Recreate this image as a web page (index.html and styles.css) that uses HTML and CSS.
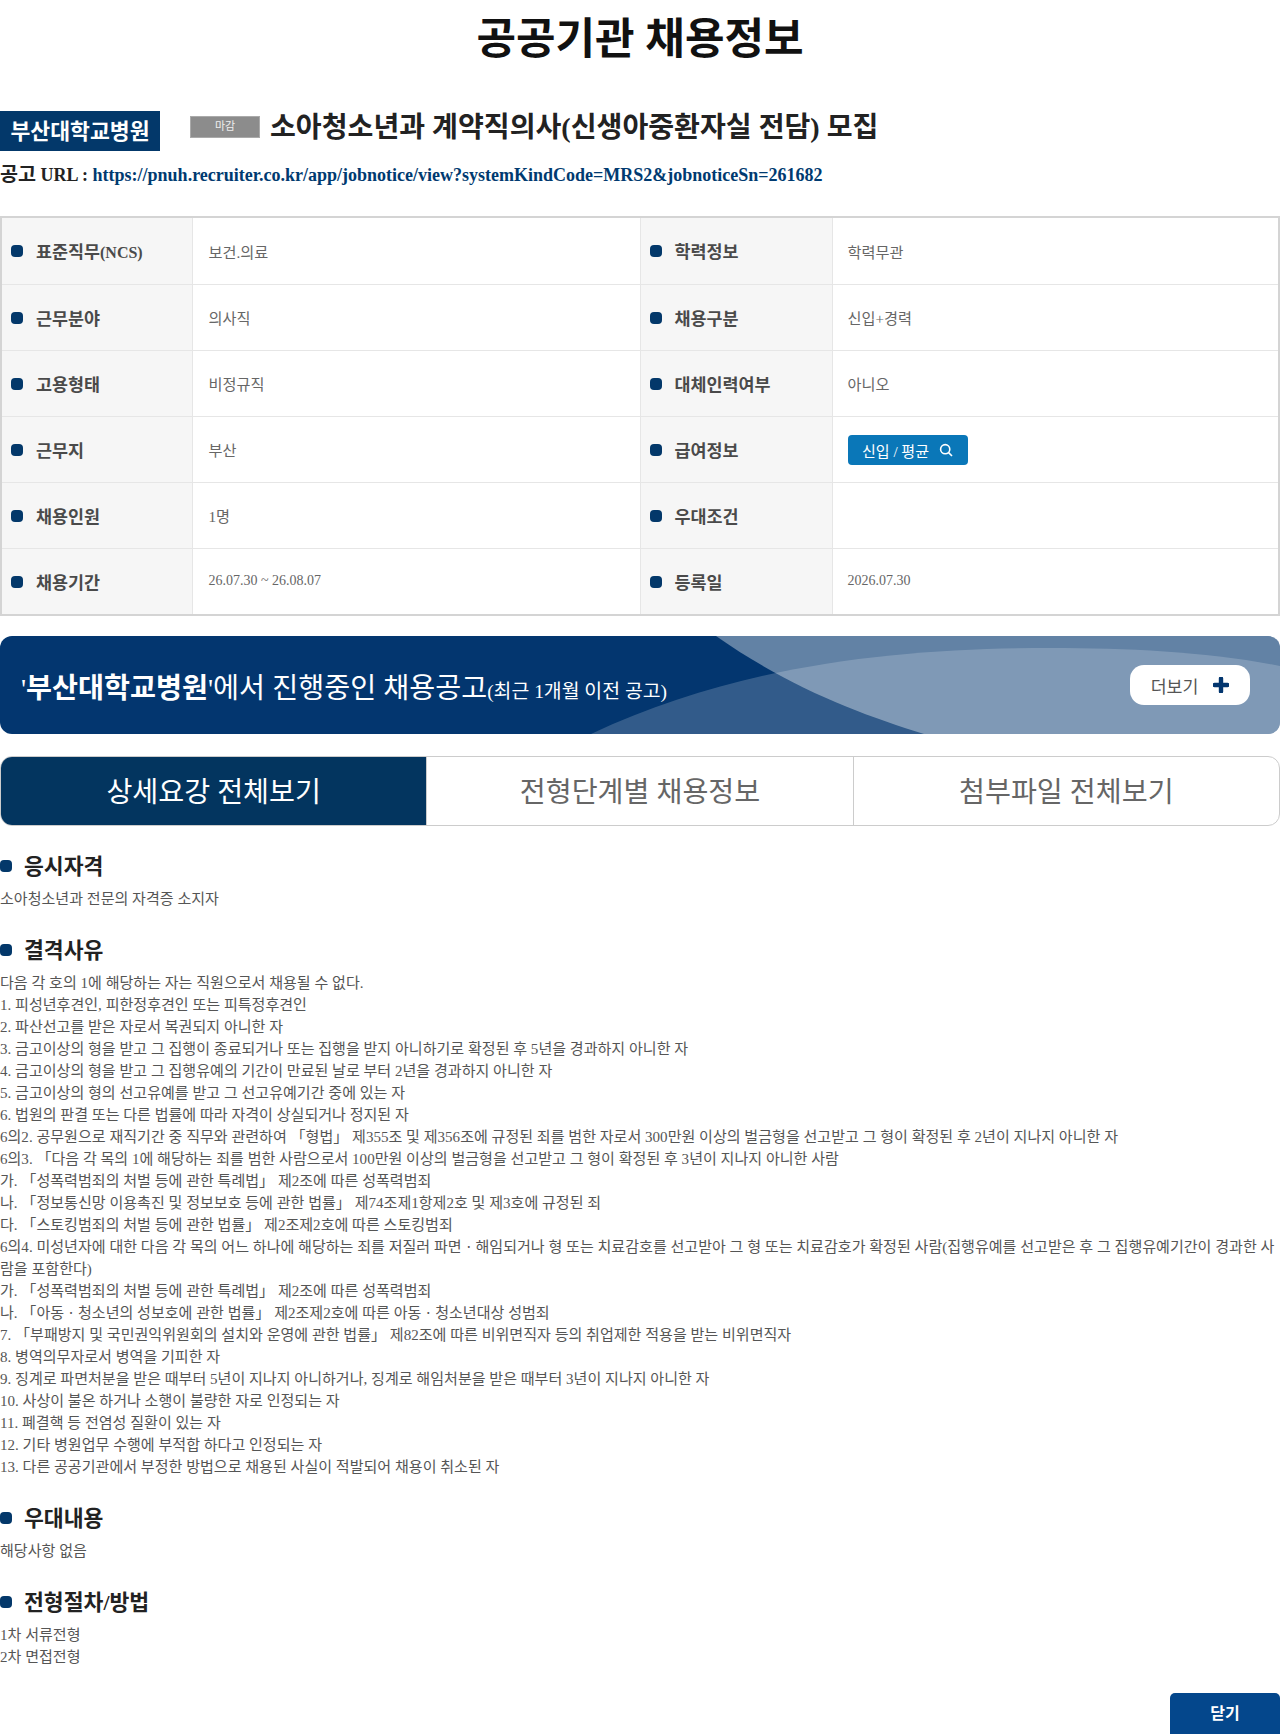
FILE: index.html
```html
<!DOCTYPE html>
<html lang="ko">
<head>
	<meta charset="UTF-8">
	<title>공공기관 채용정보</title>
	<link rel="stylesheet" href="styles.css">
</head>
<body>
<h1 class="page-title">공공기관 채용정보</h1>

<div class="job-head">
	<span class="org">부산대학교병원</span>
	<span class="state">마감</span>
	<h2 class="job-title">소아청소년과 계약직의사(신생아중환자실 전담) 모집</h2>
</div>
<p class="job-url"><span class="kr">공고</span> URL : <a href="#">https://pnuh.recruiter.co.kr/app/jobnotice/view?systemKindCode=MRS2&amp;jobnoticeSn=261682</a></p>

<table class="info">
	<tr class="edge">
		<th><i class="dot"></i>표준직무<span class="num">(NCS)</span></th><td>보건.의료</td>
		<th><i class="dot"></i>학력정보</th><td>학력무관</td>
	</tr>
	<tr>
		<th><i class="dot"></i>근무분야</th><td>의사직</td>
		<th><i class="dot"></i>채용구분</th><td>신입+경력</td>
	</tr>
	<tr>
		<th><i class="dot"></i>고용형태</th><td>비정규직</td>
		<th><i class="dot"></i>대체인력여부</th><td>아니오</td>
	</tr>
	<tr>
		<th><i class="dot"></i>근무지</th><td>부산</td>
		<th><i class="dot"></i>급여정보</th>
		<td>
			<a class="pay" href="#">신입 / 평균
				<svg width="14" height="14" viewBox="0 0 14 14" fill="none" stroke="#fff" stroke-width="1.6"><circle cx="6.2" cy="6.2" r="4.6"/><path d="M9.6 9.6L13 13"/></svg>
			</a>
		</td>
	</tr>
	<tr>
		<th><i class="dot"></i>채용인원</th><td>1명</td>
		<th><i class="dot"></i>우대조건</th><td></td>
	</tr>
	<tr class="edge">
		<th><i class="dot"></i>채용기간</th><td class="num">26.07.30 ~ 26.08.07</td>
		<th><i class="dot"></i>등록일</th><td class="num">2026.07.30</td>
	</tr>
</table>

<div class="banner">
	<svg class="banner-bg" width="1280" height="98" viewBox="0 0 1280 98">
		<path d="M716 0C790 52 860 78 924 98H1280V0Z" fill="#fff" fill-opacity=".38"/>
		<path d="M591 98C740 28 900 12 1050 12C1130 12 1210 16 1280 30V98Z" fill="#fff" fill-opacity=".19"/>
	</svg>
	<p class="banner-text">'<b>부산대학교병원</b>'에서 진행중인 채용공고<small>(최근 1개월 이전 공고)</small></p>
	<a class="more" href="#">더보기
		<svg width="16" height="16" viewBox="0 0 16 16"><path d="M8 1.5V14.5M1.5 8H14.5" stroke="#03366f" stroke-width="4.4" stroke-linecap="round"/></svg>
	</a>
</div>

<div class="tabs">
	<a class="tab active" href="#">상세요강 전체보기</a>
	<a class="tab" href="#">전형단계별 채용정보</a>
	<a class="tab" href="#">첨부파일 전체보기</a>
</div>

<div class="section">
	<h3><i class="dot"></i>응시자격</h3>
	<p>소아청소년과 전문의 자격증 소지자</p>
</div>

<div class="section">
	<h3><i class="dot"></i>결격사유</h3>
	<p>다음 각 호의 1에 해당하는 자는 직원으로서 채용될 수 없다.<br>
	1. 피성년후견인, 피한정후견인 또는 피특정후견인<br>
	2. 파산선고를 받은 자로서 복권되지 아니한 자<br>
	3. 금고이상의 형을 받고 그 집행이 종료되거나 또는 집행을 받지 아니하기로 확정된 후 5년을 경과하지 아니한 자<br>
	4. 금고이상의 형을 받고 그 집행유예의 기간이 만료된 날로 부터 2년을 경과하지 아니한 자<br>
	5. 금고이상의 형의 선고유예를 받고 그 선고유예기간 중에 있는 자<br>
	6. 법원의 판결 또는 다른 법률에 따라 자격이 상실되거나 정지된 자<br>
	6의2. 공무원으로 재직기간 중 직무와 관련하여 「형법」 제355조 및 제356조에 규정된 죄를 범한 자로서 300만원 이상의 벌금형을 선고받고 그 형이 확정된 후 2년이 지나지 아니한 자<br>
	6의3. 「다음 각 목의 1에 해당하는 죄를 범한 사람으로서 100만원 이상의 벌금형을 선고받고 그 형이 확정된 후 3년이 지나지 아니한 사람<br>
	가. 「성폭력범죄의 처벌 등에 관한 특례법」 제2조에 따른 성폭력범죄<br>
	나. 「정보통신망 이용촉진 및 정보보호 등에 관한 법률」 제74조제1항제2호 및 제3호에 규정된 죄<br>
	다. 「스토킹범죄의 처벌 등에 관한 법률」 제2조제2호에 따른 스토킹범죄<br>
	6의4. 미성년자에 대한 다음 각 목의 어느 하나에 해당하는 죄를 저질러 파면ㆍ해임되거나 형 또는 치료감호를 선고받아 그 형 또는 치료감호가 확정된 사람(집행유예를 선고받은 후 그 집행유예기간이 경과한 사람을 포함한다)<br>
	가. 「성폭력범죄의 처벌 등에 관한 특례법」 제2조에 따른 성폭력범죄<br>
	나. 「아동ㆍ청소년의 성보호에 관한 법률」 제2조제2호에 따른 아동ㆍ청소년대상 성범죄<br>
	7. 「부패방지 및 국민권익위원회의 설치와 운영에 관한 법률」 제82조에 따른 비위면직자 등의 취업제한 적용을 받는 비위면직자<br>
	8. 병역의무자로서 병역을 기피한 자<br>
	9. 징계로 파면처분을 받은 때부터 5년이 지나지 아니하거나, 징계로 해임처분을 받은 때부터 3년이 지나지 아니한 자<br>
	10. 사상이 불온 하거나 소행이 불량한 자로 인정되는 자<br>
	11. 폐결핵 등 전염성 질환이 있는 자<br>
	12. 기타 병원업무 수행에 부적합 하다고 인정되는 자<br>
	13. 다른 공공기관에서 부정한 방법으로 채용된 사실이 적발되어 채용이 취소된 자</p>
</div>

<div class="section">
	<h3><i class="dot"></i>우대내용</h3>
	<p>해당사항 없음</p>
</div>

<div class="section">
	<h3><i class="dot"></i>전형절차/방법</h3>
	<p>1차 서류전형<br>2차 면접전형</p>
</div>

<div class="close-row">
	<a class="close" href="#">닫기</a>
</div>
</body>
</html>
```

FILE: styles.css
```css
body {
    margin: 0;
    font-family: "Liberation Serif", "Noto Sans CJK KR", serif;
    color: #555;
    background: #fff;
}
a {
    text-decoration: none;
}
.dot {
    display: inline-block;
    width: 12px;
    height: 12px;
    border-radius: 4px;
    background: #03386a;
}
.page-title {
    margin: 0;
    padding-top: 14px;
    height: 99px;
    box-sizing: border-box;
    text-align: center;
    font-size: 43px;
    line-height: 52px;
    color: #111;
}
.job-head {
    display: flex;
    align-items: flex-start;
    height: 40px;
    margin-top: 12px;
}
.org {
    width: 160px;
    height: 40px;
    background: #03386a;
    color: #fff;
    font-size: 21.6px;
    font-weight: bold;
    line-height: 43px;
    text-align: center;
}
.state {
    width: 70px;
    height: 22px;
    margin: 5px 0 0 30px;
    box-sizing: border-box;
    border: 1px solid #aaa;
    background: #8c8c8c;
    color: #eee;
    font-size: 11px;
    line-height: 18px;
    text-align: center;
}
.job-title {
    margin: 2px 0 0 10px;
    font-size: 28.1px;
    line-height: 30px;
    color: #222;
}
.job-url {
    margin: 12px 0 0;
    font-size: 18px;
    line-height: 24px;
    font-weight: bold;
    color: #222;
}
.job-url .kr {
    font-size: 19.6px;
}
.job-url a {
    color: #003a70;
}
.info {
    width: 1280px;
    margin-top: 29px;
    border-collapse: collapse;
    table-layout: fixed;
    border: 2px solid #d4d4d4;
}
.info tr {
    height: 66px;
}
.info tr.edge {
    height: 67px;
}
.info th, .info td {
    padding: 0;
    box-sizing: border-box;
    border: 1px solid #e6e6e6;
    font-size: 15.2px;
    text-align: left;
}
.info th {
    width: 191px;
    padding-left: 9px;
    background: #f6f6f6;
    font-size: 17.4px;
    color: #4a4a4a;
}
.info th:nth-child(3) {
    width: 192px;
}
.info td {
    padding-left: 16px;
    color: #666;
}
.info td:nth-child(2) {
    width: 448px;
}
.info td:nth-child(4) {
    padding-left: 15px;
}
.info .num {
    font-size: 16px;
}
.info td.num {
    font-size: 14px;
}
.info .dot {
    margin-right: 13px;
    position: relative;
    top: -1px;
}
.pay {
    display: inline-flex;
    align-items: center;
    justify-content: center;
    gap: 10px;
    width: 120px;
    height: 30px;
    margin-top: 2px;
    border-radius: 4px;
    background: #0a77b8;
    color: #fff;
    font-size: 15px;
    vertical-align: middle;
}
.banner {
    position: relative;
    display: flex;
    align-items: center;
    justify-content: space-between;
    height: 98px;
    margin-top: 20px;
    padding: 0 30px 0 21px;
    border-radius: 12px;
    overflow: hidden;
    background: #03366f;
}
.banner-bg {
    position: absolute;
    left: 0;
    top: 0;
}
.banner-text {
    position: relative;
    margin: 0;
    font-size: 28.26px;
    color: #fff;
}
.banner-text small {
    font-size: 19.4px;
}
.more {
    position: relative;
    display: flex;
    align-items: center;
    justify-content: center;
    gap: 15px;
    width: 120px;
    height: 40px;
    border-radius: 14px;
    background: #fff;
    color: #555;
    font-size: 17.3px;
}
.tabs {
    display: flex;
    height: 70px;
    margin-top: 22px;
    box-sizing: border-box;
    border: 1px solid #ccc;
    border-radius: 12px;
    overflow: hidden;
}
.tab {
    flex: 1;
    border-left: 1px solid #ccc;
    color: #666;
    font-size: 28.2px;
    line-height: 72px;
    text-align: center;
}
.tab.active {
    border-left: 0;
    background: #03355f;
    color: #fff;
}
.section {
    margin-top: 26px;
}
.section h3 {
    margin: 0;
    font-size: 21.6px;
    line-height: 30px;
    color: #222;
}
.section h3 .dot {
    margin-right: 12px;
    position: relative;
    top: -2px;
}
.section p {
    margin: 6px 0 0;
    font-size: 15.05px;
    line-height: 22px;
    color: #555;
    word-break: break-all;
}
.close-row {
    display: flex;
    justify-content: flex-end;
    margin-top: 25px;
}
.close {
    width: 110px;
    height: 41px;
    border-radius: 5px 5px 0 0;
    background: #04478c;
    color: #fff;
    font-size: 16px;
    font-weight: bold;
    line-height: 41px;
    text-align: center;
}
```
